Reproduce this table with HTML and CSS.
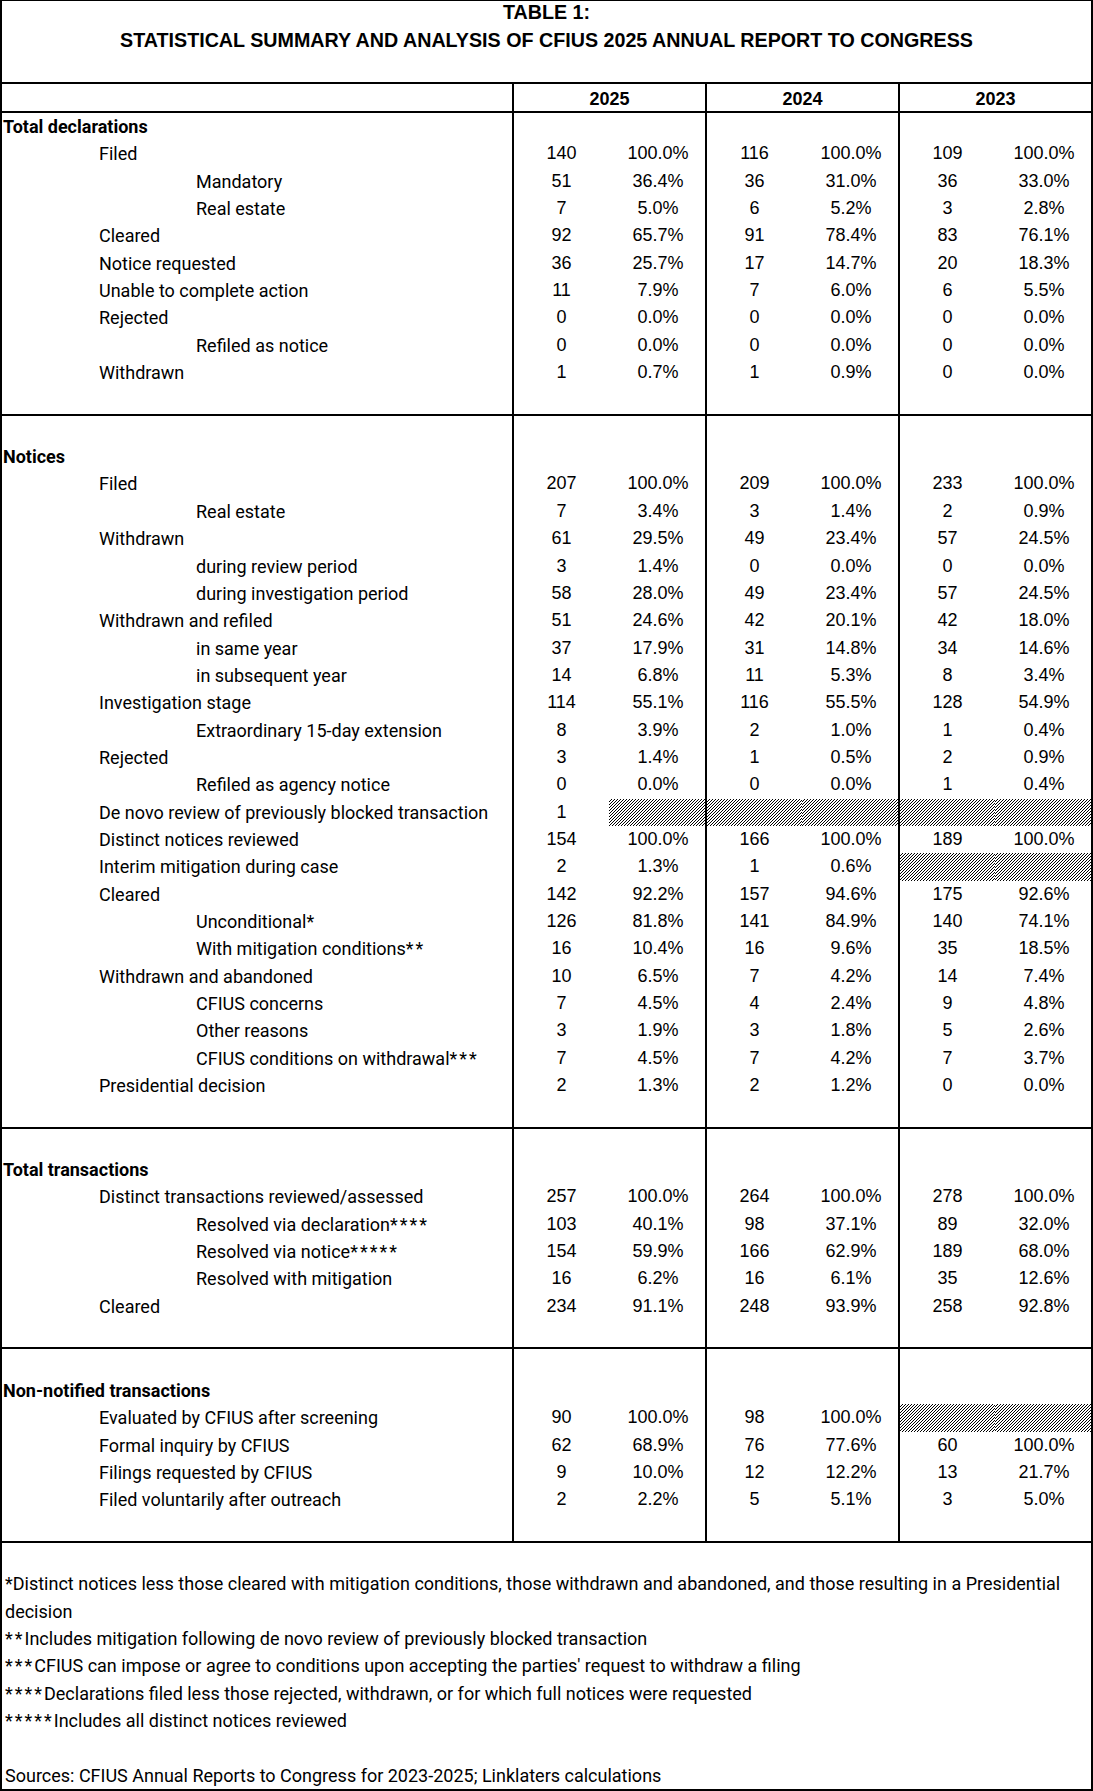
FILE: index.html
```
<!DOCTYPE html>
<html lang="en">
  <head>
    <meta charset="UTF-8" />
    <meta name="viewport" content="width=device-width, initial-scale=1.0" />
    <title>Table 1: CFIUS 2025 Annual Report Summary</title>
    <link rel="stylesheet" href="styles.css">
  </head>
  <body>
    <div class="sheet">
      <div class="title">
        <div class="t1">TABLE 1:</div>
        <div class="t2">STATISTICAL SUMMARY AND ANALYSIS OF CFIUS 2025 ANNUAL REPORT TO CONGRESS</div>
      </div>

      <div class="sec">
        <div class="row head">
          <span class="label"></span>
          <span class="year">2025</span>
          <span class="year">2024</span>
          <span class="year">2023</span>
        </div>
      </div>

      <!-- declarations -->
      <div class="sec">
        <div class="row"><span class="label bold">Total declarations</span><span class="n"></span><span class="p"></span><span class="n"></span><span class="p"></span><span class="n"></span><span class="p"></span></div>
        <div class="row"><span class="label l1">Filed</span><span class="n">140</span><span class="p">100.0%</span><span class="n">116</span><span class="p">100.0%</span><span class="n">109</span><span class="p">100.0%</span></div>
        <div class="row"><span class="label l2">Mandatory</span><span class="n">51</span><span class="p">36.4%</span><span class="n">36</span><span class="p">31.0%</span><span class="n">36</span><span class="p">33.0%</span></div>
        <div class="row"><span class="label l2">Real estate</span><span class="n">7</span><span class="p">5.0%</span><span class="n">6</span><span class="p">5.2%</span><span class="n">3</span><span class="p">2.8%</span></div>
        <div class="row"><span class="label l1">Cleared</span><span class="n">92</span><span class="p">65.7%</span><span class="n">91</span><span class="p">78.4%</span><span class="n">83</span><span class="p">76.1%</span></div>
        <div class="row"><span class="label l1">Notice requested</span><span class="n">36</span><span class="p">25.7%</span><span class="n">17</span><span class="p">14.7%</span><span class="n">20</span><span class="p">18.3%</span></div>
        <div class="row"><span class="label l1">Unable to complete action</span><span class="n">11</span><span class="p">7.9%</span><span class="n">7</span><span class="p">6.0%</span><span class="n">6</span><span class="p">5.5%</span></div>
        <div class="row"><span class="label l1">Rejected</span><span class="n">0</span><span class="p">0.0%</span><span class="n">0</span><span class="p">0.0%</span><span class="n">0</span><span class="p">0.0%</span></div>
        <div class="row"><span class="label l2">Refiled as notice</span><span class="n">0</span><span class="p">0.0%</span><span class="n">0</span><span class="p">0.0%</span><span class="n">0</span><span class="p">0.0%</span></div>
        <div class="row"><span class="label l1">Withdrawn</span><span class="n">1</span><span class="p">0.7%</span><span class="n">1</span><span class="p">0.9%</span><span class="n">0</span><span class="p">0.0%</span></div>
        <div class="row"><span class="label"></span><span class="n"></span><span class="p"></span><span class="n"></span><span class="p"></span><span class="n"></span><span class="p"></span></div>
      </div>

      <!-- notices -->
      <div class="sec">
        <div class="row"><span class="label"></span><span class="n"></span><span class="p"></span><span class="n"></span><span class="p"></span><span class="n"></span><span class="p"></span></div>
        <div class="row"><span class="label bold">Notices</span><span class="n"></span><span class="p"></span><span class="n"></span><span class="p"></span><span class="n"></span><span class="p"></span></div>
        <div class="row"><span class="label l1">Filed</span><span class="n">207</span><span class="p">100.0%</span><span class="n">209</span><span class="p">100.0%</span><span class="n">233</span><span class="p">100.0%</span></div>
        <div class="row"><span class="label l2">Real estate</span><span class="n">7</span><span class="p">3.4%</span><span class="n">3</span><span class="p">1.4%</span><span class="n">2</span><span class="p">0.9%</span></div>
        <div class="row"><span class="label l1">Withdrawn</span><span class="n">61</span><span class="p">29.5%</span><span class="n">49</span><span class="p">23.4%</span><span class="n">57</span><span class="p">24.5%</span></div>
        <div class="row"><span class="label l2">during review period</span><span class="n">3</span><span class="p">1.4%</span><span class="n">0</span><span class="p">0.0%</span><span class="n">0</span><span class="p">0.0%</span></div>
        <div class="row"><span class="label l2">during investigation period</span><span class="n">58</span><span class="p">28.0%</span><span class="n">49</span><span class="p">23.4%</span><span class="n">57</span><span class="p">24.5%</span></div>
        <div class="row"><span class="label l1">Withdrawn and refiled</span><span class="n">51</span><span class="p">24.6%</span><span class="n">42</span><span class="p">20.1%</span><span class="n">42</span><span class="p">18.0%</span></div>
        <div class="row"><span class="label l2">in same year</span><span class="n">37</span><span class="p">17.9%</span><span class="n">31</span><span class="p">14.8%</span><span class="n">34</span><span class="p">14.6%</span></div>
        <div class="row"><span class="label l2">in subsequent year</span><span class="n">14</span><span class="p">6.8%</span><span class="n">11</span><span class="p">5.3%</span><span class="n">8</span><span class="p">3.4%</span></div>
        <div class="row"><span class="label l1">Investigation stage</span><span class="n">114</span><span class="p">55.1%</span><span class="n">116</span><span class="p">55.5%</span><span class="n">128</span><span class="p">54.9%</span></div>
        <div class="row"><span class="label l2">Extraordinary 15-day extension</span><span class="n">8</span><span class="p">3.9%</span><span class="n">2</span><span class="p">1.0%</span><span class="n">1</span><span class="p">0.4%</span></div>
        <div class="row"><span class="label l1">Rejected</span><span class="n">3</span><span class="p">1.4%</span><span class="n">1</span><span class="p">0.5%</span><span class="n">2</span><span class="p">0.9%</span></div>
        <div class="row"><span class="label l2">Refiled as agency notice</span><span class="n">0</span><span class="p">0.0%</span><span class="n">0</span><span class="p">0.0%</span><span class="n">1</span><span class="p">0.4%</span></div>
        <div class="row"><span class="label l1">De novo review of previously blocked transaction</span><span class="n">1</span><span class="p hatch"></span><span class="n hatch"></span><span class="p hatch"></span><span class="n hatch"></span><span class="p hatch"></span></div>
        <div class="row"><span class="label l1">Distinct notices reviewed</span><span class="n">154</span><span class="p">100.0%</span><span class="n">166</span><span class="p">100.0%</span><span class="n">189</span><span class="p">100.0%</span></div>
        <div class="row"><span class="label l1">Interim mitigation during case</span><span class="n">2</span><span class="p">1.3%</span><span class="n">1</span><span class="p">0.6%</span><span class="n hatch"></span><span class="p hatch"></span></div>
        <div class="row"><span class="label l1">Cleared</span><span class="n">142</span><span class="p">92.2%</span><span class="n">157</span><span class="p">94.6%</span><span class="n">175</span><span class="p">92.6%</span></div>
        <div class="row"><span class="label l2">Unconditional*</span><span class="n">126</span><span class="p">81.8%</span><span class="n">141</span><span class="p">84.9%</span><span class="n">140</span><span class="p">74.1%</span></div>
        <div class="row"><span class="label l2">With mitigation conditions<span class="ast">**</span></span><span class="n">16</span><span class="p">10.4%</span><span class="n">16</span><span class="p">9.6%</span><span class="n">35</span><span class="p">18.5%</span></div>
        <div class="row"><span class="label l1">Withdrawn and abandoned</span><span class="n">10</span><span class="p">6.5%</span><span class="n">7</span><span class="p">4.2%</span><span class="n">14</span><span class="p">7.4%</span></div>
        <div class="row"><span class="label l2">CFIUS concerns</span><span class="n">7</span><span class="p">4.5%</span><span class="n">4</span><span class="p">2.4%</span><span class="n">9</span><span class="p">4.8%</span></div>
        <div class="row"><span class="label l2">Other reasons</span><span class="n">3</span><span class="p">1.9%</span><span class="n">3</span><span class="p">1.8%</span><span class="n">5</span><span class="p">2.6%</span></div>
        <div class="row"><span class="label l2">CFIUS conditions on withdrawal<span class="ast">***</span></span><span class="n">7</span><span class="p">4.5%</span><span class="n">7</span><span class="p">4.2%</span><span class="n">7</span><span class="p">3.7%</span></div>
        <div class="row"><span class="label l1">Presidential decision</span><span class="n">2</span><span class="p">1.3%</span><span class="n">2</span><span class="p">1.2%</span><span class="n">0</span><span class="p">0.0%</span></div>
        <div class="row"><span class="label"></span><span class="n"></span><span class="p"></span><span class="n"></span><span class="p"></span><span class="n"></span><span class="p"></span></div>
      </div>

      <!-- transactions -->
      <div class="sec">
        <div class="row"><span class="label"></span><span class="n"></span><span class="p"></span><span class="n"></span><span class="p"></span><span class="n"></span><span class="p"></span></div>
        <div class="row"><span class="label bold">Total transactions</span><span class="n"></span><span class="p"></span><span class="n"></span><span class="p"></span><span class="n"></span><span class="p"></span></div>
        <div class="row"><span class="label l1">Distinct transactions reviewed/assessed</span><span class="n">257</span><span class="p">100.0%</span><span class="n">264</span><span class="p">100.0%</span><span class="n">278</span><span class="p">100.0%</span></div>
        <div class="row"><span class="label l2">Resolved via declaration<span class="ast">****</span></span><span class="n">103</span><span class="p">40.1%</span><span class="n">98</span><span class="p">37.1%</span><span class="n">89</span><span class="p">32.0%</span></div>
        <div class="row"><span class="label l2">Resolved via notice<span class="ast">*****</span></span><span class="n">154</span><span class="p">59.9%</span><span class="n">166</span><span class="p">62.9%</span><span class="n">189</span><span class="p">68.0%</span></div>
        <div class="row"><span class="label l2">Resolved with mitigation</span><span class="n">16</span><span class="p">6.2%</span><span class="n">16</span><span class="p">6.1%</span><span class="n">35</span><span class="p">12.6%</span></div>
        <div class="row"><span class="label l1">Cleared</span><span class="n">234</span><span class="p">91.1%</span><span class="n">248</span><span class="p">93.9%</span><span class="n">258</span><span class="p">92.8%</span></div>
        <div class="row"><span class="label"></span><span class="n"></span><span class="p"></span><span class="n"></span><span class="p"></span><span class="n"></span><span class="p"></span></div>
      </div>

      <!-- non-notified -->
      <div class="sec">
        <div class="row"><span class="label"></span><span class="n"></span><span class="p"></span><span class="n"></span><span class="p"></span><span class="n"></span><span class="p"></span></div>
        <div class="row"><span class="label bold">Non-notified transactions</span><span class="n"></span><span class="p"></span><span class="n"></span><span class="p"></span><span class="n"></span><span class="p"></span></div>
        <div class="row"><span class="label l1">Evaluated by CFIUS after screening</span><span class="n">90</span><span class="p">100.0%</span><span class="n">98</span><span class="p">100.0%</span><span class="n hatch"></span><span class="p hatch"></span></div>
        <div class="row"><span class="label l1">Formal inquiry by CFIUS</span><span class="n">62</span><span class="p">68.9%</span><span class="n">76</span><span class="p">77.6%</span><span class="n">60</span><span class="p">100.0%</span></div>
        <div class="row"><span class="label l1">Filings requested by CFIUS</span><span class="n">9</span><span class="p">10.0%</span><span class="n">12</span><span class="p">12.2%</span><span class="n">13</span><span class="p">21.7%</span></div>
        <div class="row"><span class="label l1">Filed voluntarily after outreach</span><span class="n">2</span><span class="p">2.2%</span><span class="n">5</span><span class="p">5.1%</span><span class="n">3</span><span class="p">5.0%</span></div>
        <div class="row"><span class="label"></span><span class="n"></span><span class="p"></span><span class="n"></span><span class="p"></span><span class="n"></span><span class="p"></span></div>
      </div>

      <div class="sec notes">
        <p>*Distinct notices less those cleared with mitigation conditions, those withdrawn and abandoned, and those resulting in a Presidential decision</p>
        <p><span class="ast">**</span>Includes mitigation following de novo review of previously blocked transaction</p>
        <p><span class="ast">***</span>CFIUS can impose or agree to conditions upon accepting the parties' request to withdraw a filing</p>
        <p><span class="ast">****</span>Declarations filed less those rejected, withdrawn, or for which full notices were requested</p>
        <p><span class="ast">*****</span>Includes all distinct notices reviewed</p>
        <p class="src">Sources: CFIUS Annual Reports to Congress for 2023-2025; Linklaters calculations</p>
      </div>
    </div>
  </body>
</html>
```

FILE: styles.css
```
* {
  margin: 0;
  padding: 0;
  box-sizing: border-box;
}

body {
  font-family: Roboto, "Noto Sans", sans-serif;
  color: #000;
  background: #fff;
}

.sheet {
  width: 1093px;
  border-top: 1px solid #000;
  border-left: 2px solid #000;
  border-right: 2px solid #000;
  border-bottom: 2px solid #000;
}

.title {
  height: 81px;
  text-align: center;
  font-family: "Liberation Sans", Arial, sans-serif;
  font-weight: bold;
  font-size: 19.7px;
}

.title .t1 {
  line-height: 22px;
}

.title .t2 {
  line-height: 34px;
}

.sec {
  border-top: 2px solid #000;
}

.row {
  display: grid;
  grid-template-columns: 510px 97px 96px 97px 96px 97px 96px;
  height: 27.35px;
  line-height: 27.35px;
}

.row.head {
  grid-template-columns: 510px 193px 193px 193px;
  height: 27px;
  line-height: 27px;
}

.label {
  font-size: 18px;
  padding-left: 1px;
  white-space: nowrap;
}

.label.bold {
  font-weight: bold;
}

.label.l1 {
  padding-left: 97px;
}

.label.l2 {
  padding-left: 194px;
}

.ast {
  letter-spacing: 2px;
}

.n,
.p,
.year {
  font-family: "Liberation Sans", Arial, sans-serif;
  font-size: 18px;
  text-align: center;
}

.n,
.year {
  border-left: 2px solid #000;
}

.year {
  font-weight: bold;
  padding-top: 2px;
}

.p {
  padding-left: 2px;
}

.hatch {
  background: repeating-linear-gradient(
    135deg,
    #000 0,
    #000 0.6px,
    #fff 0.6px,
    #fff 2.1213px
  );
}

.notes {
  padding: 27.35px 0 0 3px;
  font-size: 18px;
  line-height: 27.35px;
}

.notes .src {
  margin-top: 27.35px;
}
```
